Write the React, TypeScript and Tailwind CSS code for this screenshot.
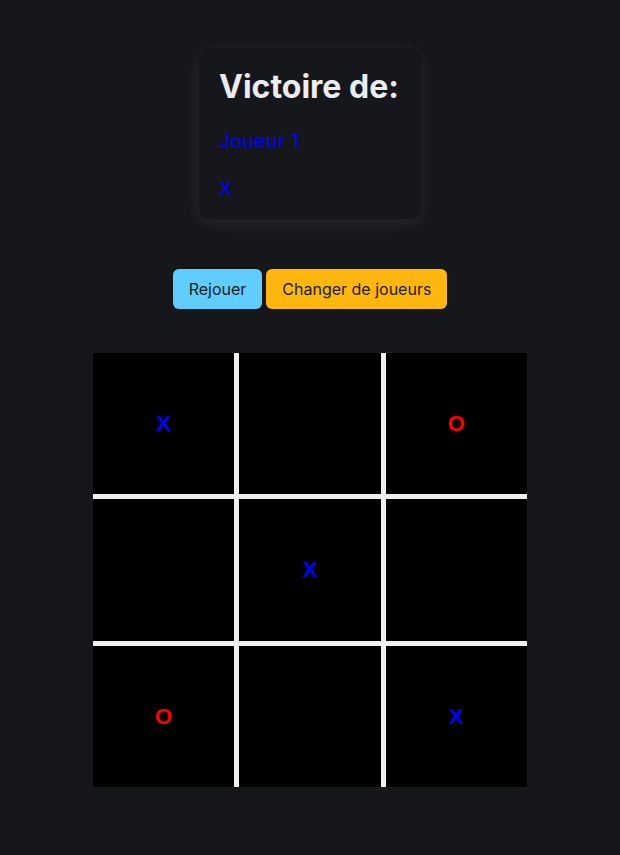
const board = ['X', '', 'O', '', 'X', '', 'O', '', 'X'];

function Cell({ value }: { value: string }) {
    return (
        <div className="bg-black flex items-center justify-center">
            {value && (
                <span
                    className={`text-[22px] font-bold ${value === 'X' ? 'text-[#0000ff]' : 'text-[#ff0000]'}`}
                    style={{ fontFamily: '"Liberation Sans", Arial, sans-serif' }}
                >
                    {value}
                </span>
            )}
        </div>
    );
}

export default function App() {
    return (
        <div
            className="min-h-screen bg-[#16171b] flex flex-col items-center pt-[47px]"
            style={{ fontFamily: 'Inter, "Noto Sans", sans-serif' }}
        >
            <div className="w-[224px] h-[173px] rounded-xl border border-[#1d1e22] bg-[#16171b] shadow-[0_4px_16px_rgba(255,255,255,0.07)] px-5 pt-[19px]">
                <h1 className="text-[32px] font-bold text-[#ececf0] leading-10">Victoire de:</h1>
                <p className="text-[20px] text-[#0000ff] mt-5 leading-7">Joueur 1</p>
                <p className="text-[20px] text-[#0000ff] mt-5 leading-7">X</p>
            </div>

            <div className="flex gap-1 mt-[49px]">
                <button className="h-10 px-4 rounded-md bg-[#61cdff] text-[#1c1c1c] text-base">Rejouer</button>
                <button className="h-10 px-4 rounded-md bg-[#ffb70f] text-[#1c1c1c] text-base">Changer de joueurs</button>
            </div>

            <div className="mt-[44px] w-[434px] h-[434px] bg-[#f0f0f0] grid grid-cols-3 grid-rows-3 gap-[5px]">
                {board.map((v, i) => (
                    <Cell key={i} value={v} />
                ))}
            </div>
        </div>
    );
}
